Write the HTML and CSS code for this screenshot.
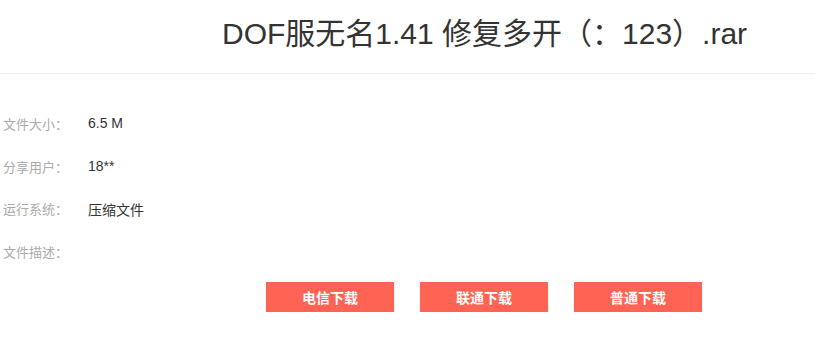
FILE: index.html
```html
<!DOCTYPE html>
<html lang="zh-CN">
<head>
<meta charset="utf-8">
<title>DOF服无名1.41 修复多开（：123）.rar</title>
<link rel="stylesheet" href="styles.css">
</head>
<body>
<div class="header">
  <h1 class="title">DOF服无名1.41 修复多开（：123）.rar</h1>
</div>
<div class="info">
  <div class="row"><span class="label">文件大小：</span><span class="value">6.5 M</span></div>
  <div class="row"><span class="label">分享用户：</span><span class="value">18**</span></div>
  <div class="row"><span class="label">运行系统：</span><span class="value">压缩文件</span></div>
  <div class="row"><span class="label">文件描述：</span><span class="value"></span></div>
</div>
<div class="buttons">
  <a class="btn" href="#">电信下载</a>
  <a class="btn" href="#">联通下载</a>
  <a class="btn" href="#">普通下载</a>
</div>
</body>
</html>
```
FILE: styles.css
```css
html, body {
  margin: 0;
  padding: 0;
  background: #fff;
}
body {
  font-family: "Liberation Sans", Arial, "Noto Sans CJK SC", sans-serif;
  color: #333;
}
.header {
  box-sizing: border-box;
  height: 74px;
  border-bottom: 1px solid #ececec;
}
.title {
  margin: 0;
  padding-left: 222px;
  font-size: 30px;
  font-weight: normal;
  line-height: 68px;
  color: #333;
  white-space: nowrap;
}
.info {
  padding: 28px 0 0 3px;
}
.row {
  display: flex;
  align-items: center;
  height: 42.7px;
}
.label {
  width: 85px;
  font-size: 13px;
  color: #aaa;
}
.value {
  font-size: 14px;
  color: #333;
}
.buttons {
  display: flex;
  gap: 26px;
  padding-left: 266px;
  margin-top: 9px;
}
.btn {
  display: flex;
  align-items: center;
  justify-content: center;
  width: 128px;
  height: 30px;
  background: #ff6353;
  color: #fff;
  font-size: 14px;
  font-weight: bold;
  text-decoration: none;
  box-shadow: 0 1px 1px rgba(0, 0, 0, 0.2);
}
```
